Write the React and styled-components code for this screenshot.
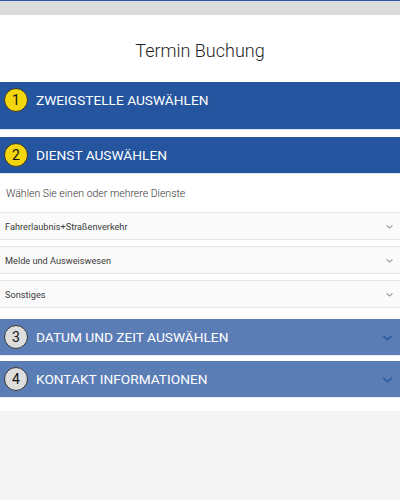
import React from 'react';
import styled, { createGlobalStyle } from 'styled-components';

const GlobalStyle = createGlobalStyle`
    html, body {
        margin: 0;
        padding: 0;
        background-color: #f4f4f4;
        font-family: Roboto, "Liberation Sans", sans-serif;
    }
`;

const Page = styled.div`
    width: 400px;
    min-height: 500px;
    background-color: #f4f4f4;
`;

const TopBar = styled.div`
    height: 14px;
    background-color: #dcdcdc;
    border-top: 1px solid #2f55a0;
`;

const Sheet = styled.div`
    background-color: #fff;
    padding-bottom: 13px;
`;

const Title = styled.h1`
    margin: 0;
    padding-top: 4px;
    height: 63px;
    display: flex;
    align-items: center;
    justify-content: center;
    font-size: 18px;
    font-weight: 300;
    color: #1e1e1e;
`;

const Section = styled.div`
    margin-bottom: ${props => props.gap}px;
`;

const Header = styled.div`
    height: ${props => props.height}px;
    display: flex;
    align-items: ${props => props.tall ? 'flex-start' : 'center'};
    padding: ${props => props.tall ? '6px' : '0'} 6px 0 4px;
    box-sizing: border-box;
    background-color: ${props => props.active ? '#24559e' : '#5b7db6'};
    color: #fff;
    border-bottom: 1px solid ${props => props.active ? '#dfe6f0' : '#e6ecf4'};
`;

const Step = styled.span`
    width: 22px;
    height: 22px;
    border-radius: 50%;
    border: 1px solid #333;
    background-color: ${props => props.active ? '#f3d60d' : '#dddddd'};
    color: #111;
    font-size: 14px;
    display: flex;
    align-items: center;
    justify-content: center;
    flex-shrink: 0;
`;

const HeaderText = styled.span`
    margin-left: 8px;
    font-size: 13.7px;
    line-height: 24px;
    flex: 1;
`;

const Chevron = styled.svg`
    flex-shrink: 0;
`;

const Body = styled.div`
    padding-bottom: 5px;
`;

const Hint = styled.p`
    margin: 0;
    height: 38px;
    padding: 0 6px;
    display: flex;
    align-items: center;
    font-size: 10.5px;
    font-weight: 300;
    color: #333;
`;

const Row = styled.div`
    height: 26px;
    display: flex;
    align-items: center;
    justify-content: space-between;
    padding: 0 6px 0 5px;
    margin-bottom: 6px;
    background-color: #fafafa;
    border-top: 1px solid #e4e4e4;
    border-bottom: 1px solid #e4e4e4;
    font-size: 9.2px;
    color: #3a3a3a;
`;

function Arrow({ color, size }) {
    return (
        <Chevron viewBox="0 0 12 12" width={size} height={size}>
            <path d="M2 4.5 L6 8 L10 4.5" fill="none" stroke={color} strokeWidth="1.4" />
        </Chevron>
    );
}

const services = [
    'Fahrerlaubnis+Straßenverkehr',
    'Melde und Ausweiswesen',
    'Sonstiges',
];

export default function App() {
    return (
        <Page>
            <GlobalStyle />
            <TopBar />
            <Sheet>
                <Title>Termin Buchung</Title>

                <Section gap={7}>
                    <Header active tall height={48}>
                        <Step active>1</Step>
                        <HeaderText>ZWEIGSTELLE AUSWÄHLEN</HeaderText>
                    </Header>
                </Section>

                <Section gap={0}>
                    <Header active height={37}>
                        <Step active>2</Step>
                        <HeaderText>DIENST AUSWÄHLEN</HeaderText>
                    </Header>
                    <Body>
                        <Hint>Wählen Sie einen oder mehrere Dienste</Hint>
                        {services.map(name => (
                            <Row key={name}>
                                <span>{name}</span>
                                <Arrow color="#999" size={9} />
                            </Row>
                        ))}
                    </Body>
                </Section>

                <Section gap={5}>
                    <Header height={37}>
                        <Step>3</Step>
                        <HeaderText>DATUM UND ZEIT AUSWÄHLEN</HeaderText>
                        <Arrow color="#2b5ca3" size={13} />
                    </Header>
                </Section>

                <Section gap={0}>
                    <Header height={37}>
                        <Step>4</Step>
                        <HeaderText>KONTAKT INFORMATIONEN</HeaderText>
                        <Arrow color="#2b5ca3" size={13} />
                    </Header>
                </Section>
            </Sheet>
        </Page>
    );
}
